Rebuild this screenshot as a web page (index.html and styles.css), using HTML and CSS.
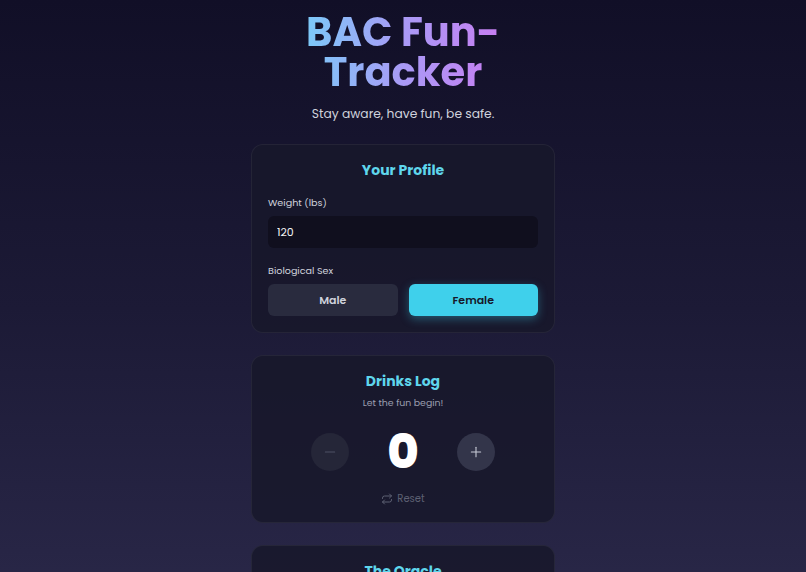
FILE: index.html
```html
<!DOCTYPE html>
<html lang="en">
<head>
    <meta charset="UTF-8">
    <meta name="viewport" content="width=device-width, initial-scale=1.0">
    <title>BAC Fun-Tracker</title>
    <link rel="stylesheet" href="styles.css">
</head>
<body>
    <div class="container">
        <header class="header">
            <h1 class="title">BAC Fun-Tracker</h1>
            <p class="tagline">Stay aware, have fun, be safe.</p>
        </header>

        <section class="card">
            <h2 class="card-title">Your Profile</h2>
            <label class="field-label" for="weight">Weight (lbs)</label>
            <input class="text-input" type="text" id="weight" value="120">

            <span class="field-label">Biological Sex</span>
            <div class="sex-toggle">
                <button class="toggle-btn">Male</button>
                <button class="toggle-btn active">Female</button>
            </div>
        </section>

        <section class="card card-center">
            <h2 class="card-title">Drinks Log</h2>
            <p class="card-sub">Let the fun begin!</p>
            <div class="counter">
                <button class="round-btn disabled" aria-label="Remove drink">
                    <svg width="16" height="16" viewBox="0 0 24 24" fill="none" stroke="currentColor" stroke-width="1.6" stroke-linecap="round"><path d="M5 12h14"/></svg>
                </button>
                <span class="count">0</span>
                <button class="round-btn" aria-label="Add drink">
                    <svg width="16" height="16" viewBox="0 0 24 24" fill="none" stroke="currentColor" stroke-width="1.6" stroke-linecap="round"><path d="M5 12h14"/><path d="M12 5v14"/></svg>
                </button>
            </div>
            <button class="reset-btn">
                <svg width="12" height="12" viewBox="0 0 24 24" fill="none" stroke="currentColor" stroke-width="2" stroke-linecap="round" stroke-linejoin="round"><path d="m17 2 4 4-4 4"/><path d="M3 11v-1a4 4 0 0 1 4-4h14"/><path d="m7 22-4-4 4-4"/><path d="M21 13v1a4 4 0 0 1-4 4H3"/></svg>
                Reset
            </button>
        </section>

        <section class="card card-center">
            <h2 class="card-title">The Oracle</h2>
            <p class="card-sub">Log a drink to see your estimate.</p>
        </section>
    </div>
</body>
</html>
```

FILE: styles.css
```css
* {
    box-sizing: border-box;
}

html {
    background: #121028;
}

body {
    margin: 0;
    min-height: 100vh;
    font-family: 'Poppins', 'Open Sans', 'Noto Sans', sans-serif;
    color: #e5e7eb;
    background: linear-gradient(180deg, #110f27 0%, #1c1a36 50%, #2a2849 100%);
    display: flex;
    justify-content: center;
}

.container {
    width: 304px;
    padding-top: 12px;
    display: flex;
    flex-direction: column;
    gap: 22px;
}

.header {
    text-align: center;
    margin-bottom: -1px;
}

.title {
    margin: 0;
    font-size: 40px;
    line-height: 40px;
    font-weight: 700;
    background: linear-gradient(90deg, #7cc9f8 18%, #a99af6 50%, #c77ef2 82%);
    -webkit-background-clip: text;
    background-clip: text;
    color: transparent;
    padding: 0 24px;
}

.tagline {
    margin: 13px 0 0;
    font-size: 12.3px;
    color: #cfd2dc;
}

.card {
    background: rgba(24, 23, 42, 0.85);
    border: 1px solid rgba(255, 255, 255, 0.06);
    border-radius: 12px;
    padding: 15px 16px 16px;
    display: flex;
    flex-direction: column;
}

.card-center {
    align-items: center;
    padding-bottom: 15px;
}

.card-title {
    margin: 0 0 15px;
    text-align: center;
    font-size: 14px;
    font-weight: 700;
    color: #5fd6ec;
    align-self: stretch;
}

.field-label {
    font-size: 9.6px;
    color: #cfd2dc;
    margin-bottom: 6px;
}

.text-input {
    height: 32px;
    border: none;
    border-radius: 6px;
    background: #100f1e;
    color: #f3f4f6;
    font-family: inherit;
    font-size: 11px;
    padding: 0 9px;
    margin-bottom: 16px;
    outline: none;
}

.sex-toggle {
    display: flex;
    gap: 11px;
}

.toggle-btn {
    flex: 1;
    height: 32px;
    border: none;
    border-radius: 6px;
    background: #292b3e;
    color: #cfd2dc;
    font-family: inherit;
    font-size: 11px;
    font-weight: 600;
}

.toggle-btn.active {
    background: #3fd0eb;
    color: #17182a;
    box-shadow: 0 3px 10px rgba(63, 208, 235, 0.35);
}

.card-center .card-title {
    margin-bottom: 4px;
}

.card-sub {
    margin: 0;
    font-size: 9.4px;
    color: #9b9eaf;
}

.counter {
    display: flex;
    align-items: center;
    gap: 38px;
    margin-top: 18px;
}

.round-btn {
    width: 38px;
    height: 38px;
    border: none;
    border-radius: 50%;
    background: #33354a;
    color: #c9ccd8;
    display: flex;
    align-items: center;
    justify-content: center;
    padding: 0;
}

.round-btn.disabled {
    background: #252638;
    color: #4f5165;
}

.count {
    font-size: 48px;
    font-weight: 800;
    line-height: 48px;
    color: #ffffff;
    width: 32px;
    text-align: center;
}

.reset-btn {
    margin-top: 15px;
    border: none;
    background: none;
    color: #5d6072;
    font-family: inherit;
    font-size: 10px;
    display: flex;
    align-items: center;
    gap: 4px;
    padding: 0;
}
```
